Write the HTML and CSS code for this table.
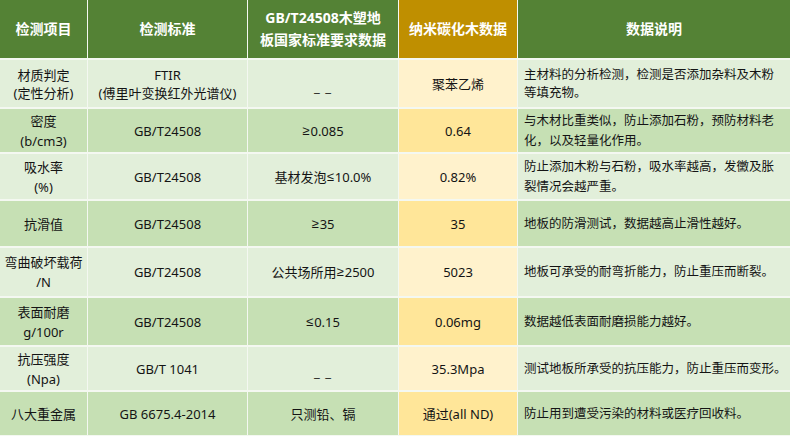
FILE: index.html
```html
<!DOCTYPE html>
<html lang="zh-CN">
<head>
<meta charset="utf-8">
<title>检测数据</title>
<link rel="stylesheet" href="styles.css">
</head>
<body>
<div class="table">
  <div class="cell head">检测项目</div>
  <div class="cell head">检测标准</div>
  <div class="cell head">GB/T24508木塑地<br>板国家标准要求数据</div>
  <div class="cell head gold">纳米碳化木数据</div>
  <div class="cell head">数据说明</div>

  <div class="cell light tight">材质判定<br>(定性分析)</div>
  <div class="cell light tight">FTIR<br>(傅里叶变换红外光谱仪)</div>
  <div class="cell light"><span class="dash">_ _</span></div>
  <div class="cell glight">聚苯乙烯</div>
  <div class="cell light tight desc">主材料的分析检测，检测是否添加杂料及木粉<br>等填充物。</div>

  <div class="cell dark">密度<br>(b/cm3)</div>
  <div class="cell dark">GB/T24508</div>
  <div class="cell dark"><span class="sym">≥</span>0.085</div>
  <div class="cell gdark">0.64</div>
  <div class="cell dark desc">与木材比重类似，防止添加石粉，预防材料老<br>化，以及轻量化作用。</div>

  <div class="cell light">吸水率<br>(%)</div>
  <div class="cell light">GB/T24508</div>
  <div class="cell light">基材发泡<span class="sym">≤</span>10.0%</div>
  <div class="cell glight">0.82%</div>
  <div class="cell light desc">防止添加木粉与石粉，吸水率越高，发黴及胀<br>裂情况会越严重。</div>

  <div class="cell dark">抗滑值</div>
  <div class="cell dark">GB/T24508</div>
  <div class="cell dark"><span class="sym">≥</span>35</div>
  <div class="cell gdark">35</div>
  <div class="cell dark desc">地板的防滑测试，数据越高止滑性越好。</div>

  <div class="cell light">弯曲破坏载荷<br>/N</div>
  <div class="cell light">GB/T24508</div>
  <div class="cell light">公共场所用<span class="sym">≥</span>2500</div>
  <div class="cell glight">5023</div>
  <div class="cell light desc">地板可承受的耐弯折能力，防止重压而断裂。</div>

  <div class="cell dark">表面耐磨<br>g/100r</div>
  <div class="cell dark">GB/T24508</div>
  <div class="cell dark"><span class="sym">≤</span>0.15</div>
  <div class="cell gdark">0.06mg</div>
  <div class="cell dark desc">数据越低表面耐磨损能力越好。</div>

  <div class="cell light">抗压强度<br>(Npa)</div>
  <div class="cell light">GB/T 1041</div>
  <div class="cell light"><span class="dash">_ _</span></div>
  <div class="cell glight">35.3Mpa</div>
  <div class="cell light desc">测试地板所承受的抗压能力，防止重压而变形。</div>

  <div class="cell dark">八大重金属</div>
  <div class="cell dark">GB 6675.4-2014</div>
  <div class="cell dark">只测铅、镉</div>
  <div class="cell gdark">通过(all ND)</div>
  <div class="cell dark desc">防止用到遭受污染的材料或医疗回收料。</div>
</div>
</body>
</html>
```

FILE: styles.css
```css
html, body {
  margin: 0;
  padding: 0;
  background: #ffffff;
}

body {
  font-family: "Noto Sans", "Noto Sans CJK SC", sans-serif;
  font-size: 13px;
  color: #141414;
}

.table {
  display: grid;
  width: 790px;
  grid-template-columns: 87px 159px 150px 118px 272px;
  grid-template-rows: 58px 47px 43px 45px 45px 48px 47px 43px 43px;
  column-gap: 1px;
  row-gap: 2px;
  background: #f4f8f1;
  padding-bottom: 1px;
}

.cell {
  display: flex;
  align-items: center;
  justify-content: center;
  text-align: center;
  line-height: 20px;
  overflow: hidden;
}

.head {
  background: #548235;
  color: #ffffff;
  font-weight: bold;
  font-size: 14px;
  line-height: 22px;
}

.head.gold {
  background: #bf8f00;
}

.light { background: #e2efda; }
.dark { background: #c6e0b4; }
.glight { background: #fff2cc; }
.gdark { background: #ffe699; }

.tight {
  line-height: 18px;
}

.sym {
  font-family: "Liberation Sans", sans-serif;
  margin-right: 1px;
}

.desc {
  justify-content: flex-start;
  text-align: left;
  padding: 0 2px 0 6px;
  font-size: 12.5px;
  white-space: nowrap;
}

.dash {
  position: relative;
  top: 3px;
  letter-spacing: 1px;
}
```
